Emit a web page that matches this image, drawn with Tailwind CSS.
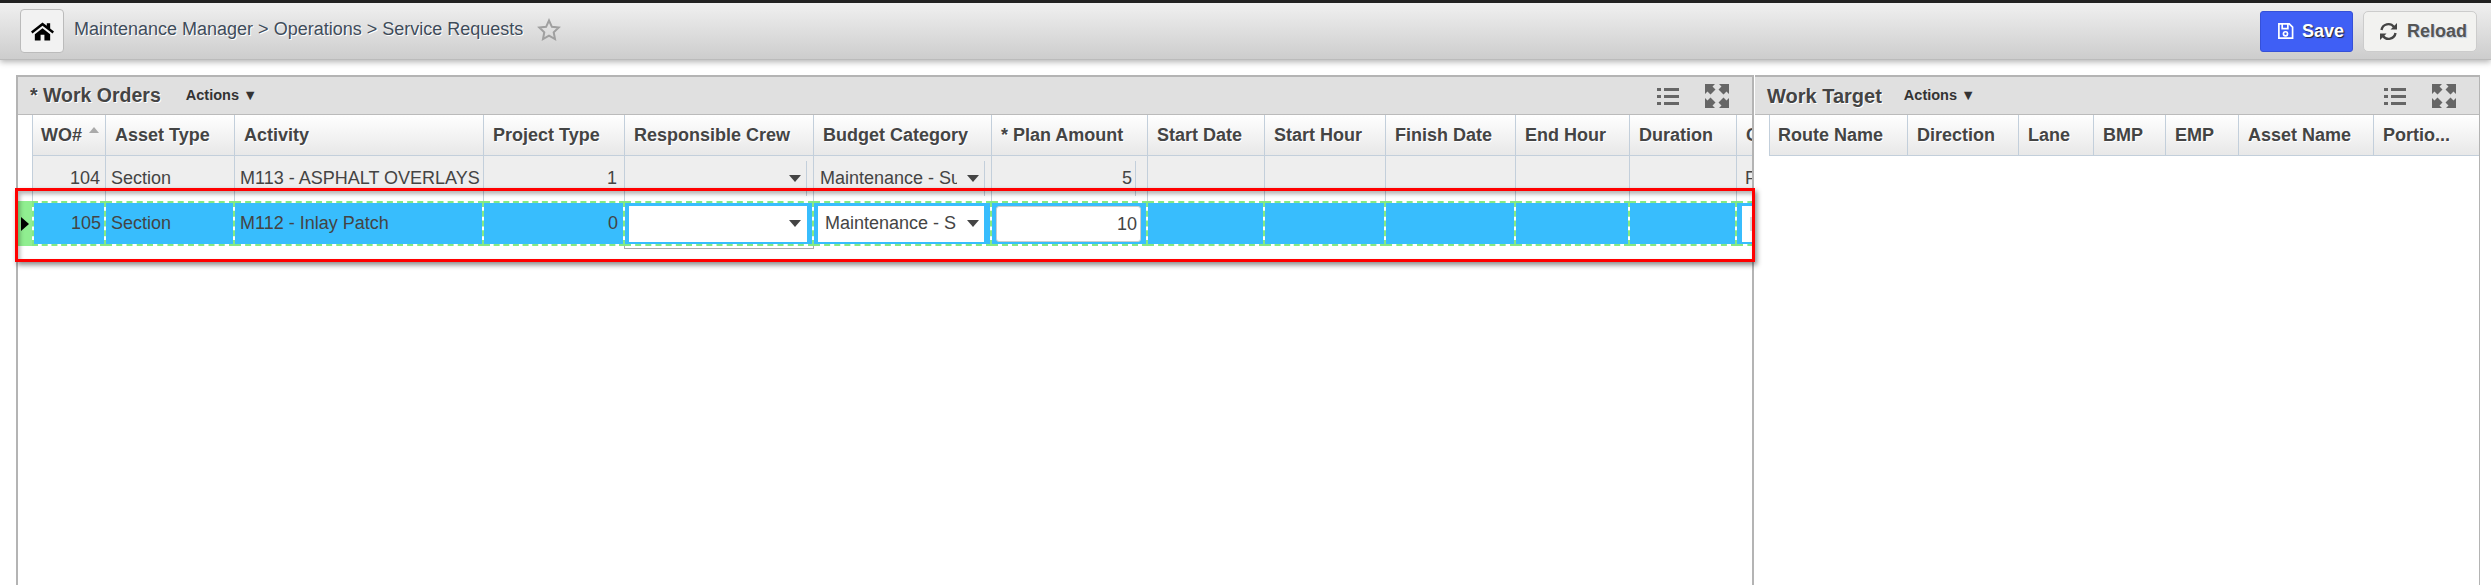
<!DOCTYPE html>
<html><head><meta charset="utf-8"><script src="https://cdn.jsdelivr.net/npm/@tailwindcss/browser@4"></script></head>
<body class="w-[2491px] h-[585px] overflow-hidden bg-white font-['Liberation_Sans',Arial,sans-serif] text-[#444] relative">
<header class="h-[60px] border-t-[3px] border-t-[#222] bg-gradient-to-b from-[#f0f0f0] to-[#cdcdcd] border-b border-b-[#bbb] shadow-[0_2px_6px_rgba(0,0,0,0.3)] flex items-center pl-[20px] pr-[14px]">
  <button class="w-[44px] h-[44px] rounded-[4px] border border-[#bbb] bg-[#f2f2f2] flex items-center justify-center">
    <svg width="23" height="20" viewBox="0 0 24 20"><path fill="#000" d="M12 1 0 10.500l1.500 2L12 4.500l10.500 8 1.500-2-4-3.200V2h-3.500v2.500zM4 13.500V20h6v-6h4v6h6v-6.500L12 7z"/></svg>
  </button>
  <span class="ml-[10px] -mt-[3px] text-[18px] text-[#3f4c5a] [text-shadow:1px_1px_0_#fff]">Maintenance Manager &gt; Operations &gt; Service Requests</span>
  <svg class="ml-[14px] -mt-[2px]" width="24" height="24" viewBox="0 0 24 24"><path fill="none" stroke="#a0a0a0" stroke-width="2" d="m12 2.500 2.900 6.300 6.800.8-5 4.700 1.300 6.800-6-3.400-6 3.400 1.300-6.800-5-4.700 6.800-.8z"/></svg>
  <div class="ml-auto flex gap-[10px]">
    <button class="w-[93px] h-[41px] rounded-[3px] bg-[#3f5ff5] border border-[#3550d8] text-white font-bold text-[18px] flex items-center justify-center gap-[8px] pl-[8px] [text-shadow:1px_1px_1px_#223]">
      <svg width="17" height="18" viewBox="0 0 18 18"><path fill="none" stroke="#fff" stroke-width="1.800" d="M2 1.500h11l3.500 3.500v11.500H2zM5.500 1.500v5h6v-5"/><circle cx="9" cy="12" r="2.200" fill="none" stroke="#fff" stroke-width="1.800"/></svg>Save</button>
    <button class="w-[114px] h-[41px] rounded-[5px] bg-[#f2f2f0] border border-[#ccc] text-[#555] font-bold text-[18px] flex items-center justify-center gap-[9px] pl-[6px] [text-shadow:1px_1px_1px_#bcd]">
      <svg width="19" height="19" viewBox="0 0 19 19"><path fill="none" stroke="#444" stroke-width="2.400" d="M2.500 8A7 7 0 0 1 15 5M16.500 11A7 7 0 0 1 4 14"/><path fill="#444" d="M18 1v6.500h-6.500zM1 18v-6.500h6.500z"/></svg>Reload</button>
  </div>
</header>
<main class="flex pl-[16px] h-[525px] pt-[15px]">
  <section class="w-[1736px] h-[515px] border-l-[2px] border-t-[2px] border-[#b4b4b4] flex flex-col overflow-hidden shrink-0">
    <div class="h-[38px] shrink-0 bg-[#e0e0e0] border-b border-[#bbb] flex items-center pl-[12px] pr-[23px]">
      <span class="font-bold text-[19.500px] [text-shadow:1px_1px_0_#fff]">* Work Orders</span>
      <span class="ml-[25px] font-bold text-[14.500px] text-[#333]">Actions ▼</span>
      <svg class="ml-auto" width="22" height="18" viewBox="0 0 22 18"><path fill="#666" d="M0 1h4v3H0zM7 1h15v3H7zM0 8h4v3H0zM7 8h15v3H7zM0 15h4v3H0zM7 15h15v3H7z"/></svg>
      <svg class="ml-[26px]" width="24" height="24" viewBox="0 0 24 24"><path fill="#666" d="M0 0h10L7.500 2.500l3 3-5 5-3-3L0 10zM24 0v10l-2.500-2.500-3 3-5-5 3-3L14 0zM0 24V14l2.500 2.500 3-3 5 5-3 3L10 24zM24 24H14l2.500-2.500-3-3 5-5 3 3L24 14z"/></svg>
    </div>
    <div class="grid w-max h-[41px] shrink-0 pl-[14px] grid-cols-[74px_129px_249px_141px_189px_178px_156px_117px_121px_130px_114px_107px_120px] [&>div]:border-r [&>div]:border-b [&>div]:border-[#c3cfdb] [&>div:first-child]:border-l [&>div]:bg-gradient-to-b [&>div]:from-white [&>div]:to-[#e8e8e8] [&>div]:font-bold [&>div]:text-[18px] [&>div]:flex [&>div]:items-center [&>div]:pl-[9px] [&>div:first-child]:pl-[8px] [&>div]:whitespace-nowrap [&>div]:[text-shadow:1px_1px_0_#fff]">
      <div>WO#<span class="ml-[7px] -mt-[10px] w-0 h-0 border-x-[5.500px] border-x-transparent border-b-[6px] border-b-[#aaa]"></span></div>
      <div>Asset Type</div>
      <div>Activity</div>
      <div>Project Type</div>
      <div>Responsible Crew</div>
      <div>Budget Category</div>
      <div>* Plan Amount</div>
      <div>Start Date</div>
      <div>Start Hour</div>
      <div>Finish Date</div>
      <div>End Hour</div>
      <div>Duration</div>
      <div>C</div>
    </div>
    <div class="grid w-max h-[45px] shrink-0 ml-[14px] grid-cols-[74px_129px_249px_141px_189px_178px_156px_117px_121px_130px_114px_107px_120px] bg-[linear-gradient(#eee_0,#eee_32px,#fff_32px)] text-[18px] whitespace-nowrap [&>div]:border-r [&>div]:border-[#c3cfdb] [&>div:first-child]:border-l [&>div]:flex [&>div]:items-center">
      <div class="justify-end pr-[5px]">104</div>
      <div class="pl-[5px]">Section</div>
      <div class="pl-[5px]">M113 - ASPHALT OVERLAYS</div>
      <div class="justify-end pr-[7px]">1</div>
      <div class="pl-[0px]">
        <span class="ml-[164px] w-0 h-0 border-x-[6px] border-x-transparent border-t-[7px] border-t-[#444]"></span>
        <span class="ml-[5px] w-px h-[35px] bg-[#c3cfdb]"></span>
      </div>
      <div class="pl-[6px]">
        <span class="w-[137px] overflow-hidden">Maintenance - Su</span>
        <span class="ml-[10px] w-0 h-0 border-x-[6px] border-x-transparent border-t-[7px] border-t-[#444]"></span>
        <span class="ml-[5px] w-px h-[35px] bg-[#c3cfdb]"></span>
      </div>
      <div class="justify-end pr-[2px]"><span class="pr-[3px]">5</span><span class="w-px h-[35px] bg-[#c3cfdb]"></span><span class="w-[9px]"></span></div>
      <div></div>
      <div></div>
      <div></div>
      <div></div>
      <div></div>
      <div class="pl-[8px]">F</div>
    </div>
    <div class="flex h-[45px] shrink-0 w-max">
      <div class="w-[14px] bg-[#90ee90] flex items-center"><svg class="ml-[3px]" width="8" height="14" viewBox="0 0 8 14"><path fill="#000" d="M0 0l8 7-8 7z"/></svg></div>
      <div class="grid grid-cols-[74px_129px_249px_141px_189px_178px_156px_117px_121px_130px_114px_107px_120px] text-[18px] whitespace-nowrap [&>div]:border-y-2 [&>div]:border-r-2 [&>div]:border-dashed [&>div]:border-[#84ea84] [&>div:first-child]:border-l-2 [&>div]:bg-[#38bdfd] [&>div]:bg-clip-padding [&>div]:flex [&>div]:items-center">
        <div class="justify-end pr-[3px]">105</div>
        <div class="pl-[5px]">Section</div>
        <div class="pl-[5px]">M112 - Inlay Patch</div>
        <div class="justify-end pr-[5px]">0</div>
        <div class="relative pl-[4px]">
          <div class="w-[178px] h-[36px] bg-white flex items-center justify-end pr-[6px]"><span class="w-0 h-0 border-x-[6px] border-x-transparent border-t-[7px] border-t-[#444]"></span></div>
          <span class="absolute left-[-1px] right-[-2px] bottom-[-5px] h-[3px] border-x border-b border-[#aaa]"></span>
        </div>
        <div class="pl-[4px]">
          <div class="w-[166px] h-[36px] bg-white flex items-center pl-[7px]"><span class="w-[133px] overflow-hidden">Maintenance - S</span><span class="ml-[9px] w-0 h-0 border-x-[6px] border-x-transparent border-t-[7px] border-t-[#444]"></span></div>
        </div>
        <div class="pl-[4px]">
          <div class="w-[145px] h-[36px] bg-white border border-[#ccc] rounded-[3px] flex items-center justify-end pr-[3px] pt-[2px]">10</div>
        </div>
        <div></div>
        <div></div>
        <div></div>
        <div></div>
        <div></div>
        <div class="pl-[5px]"><div class="w-[60px] h-[36px] bg-white flex items-center pl-[8px]"><span class="w-[2px] h-[14px] bg-[#ddd]"></span></div></div>
      </div>
    </div>
  </section>
  <div class="w-[2px] h-[515px] shrink-0 bg-[#b4b4b4]"></div>
  <section class="w-[725px] h-[515px] shrink-0 ml-[1px] border-t-[2px] border-r-[1px] border-[#b4b4b4] flex flex-col">
    <div class="h-[38px] shrink-0 bg-[#e0e0e0] border-b border-[#bbb] flex items-center pl-[12px] pr-[23px]">
      <span class="font-bold text-[20px] [text-shadow:1px_1px_0_#fff]">Work Target</span>
      <span class="ml-[22px] font-bold text-[14.500px] text-[#333]">Actions ▼</span>
      <svg class="ml-auto" width="22" height="18" viewBox="0 0 22 18"><path fill="#666" d="M0 1h4v3H0zM7 1h15v3H7zM0 8h4v3H0zM7 8h15v3H7zM0 15h4v3H0zM7 15h15v3H7z"/></svg>
      <svg class="ml-[26px]" width="24" height="24" viewBox="0 0 24 24"><path fill="#666" d="M0 0h10L7.500 2.500l3 3-5 5-3-3L0 10zM24 0v10l-2.500-2.500-3 3-5-5 3-3L14 0zM0 24V14l2.500 2.500 3-3 5 5-3 3L10 24zM24 24H14l2.500-2.500-3-3 5-5 3 3L24 14z"/></svg>
    </div>
    <div class="grid h-[41px] shrink-0 pl-[14px] grid-cols-[139px_111px_75px_72px_73px_135px_1fr] [&>div]:border-r [&>div]:border-b [&>div]:border-[#c3cfdb] [&>div:first-child]:border-l [&>div]:bg-gradient-to-b [&>div]:from-white [&>div]:to-[#e8e8e8] [&>div]:font-bold [&>div]:text-[18px] [&>div]:flex [&>div]:items-center [&>div]:pl-[9px] [&>div:first-child]:pl-[8px] [&>div]:whitespace-nowrap [&>div]:[text-shadow:1px_1px_0_#fff] [&>div:last-child]:border-r-0">
      <div>Route Name</div>
      <div>Direction</div>
      <div>Lane</div>
      <div>BMP</div>
      <div>EMP</div>
      <div>Asset Name</div>
      <div>Portio...</div>
    </div>
  </section>
</main>
<div class="absolute left-[15px] top-[188px] w-[1740px] h-[74px] border-[3px] border-[#ff0000] shadow-[2px_3px_5px_rgba(0,0,0,0.45),inset_2px_3px_4px_rgba(0,0,0,0.3)] pointer-events-none"></div>
</body></html>
